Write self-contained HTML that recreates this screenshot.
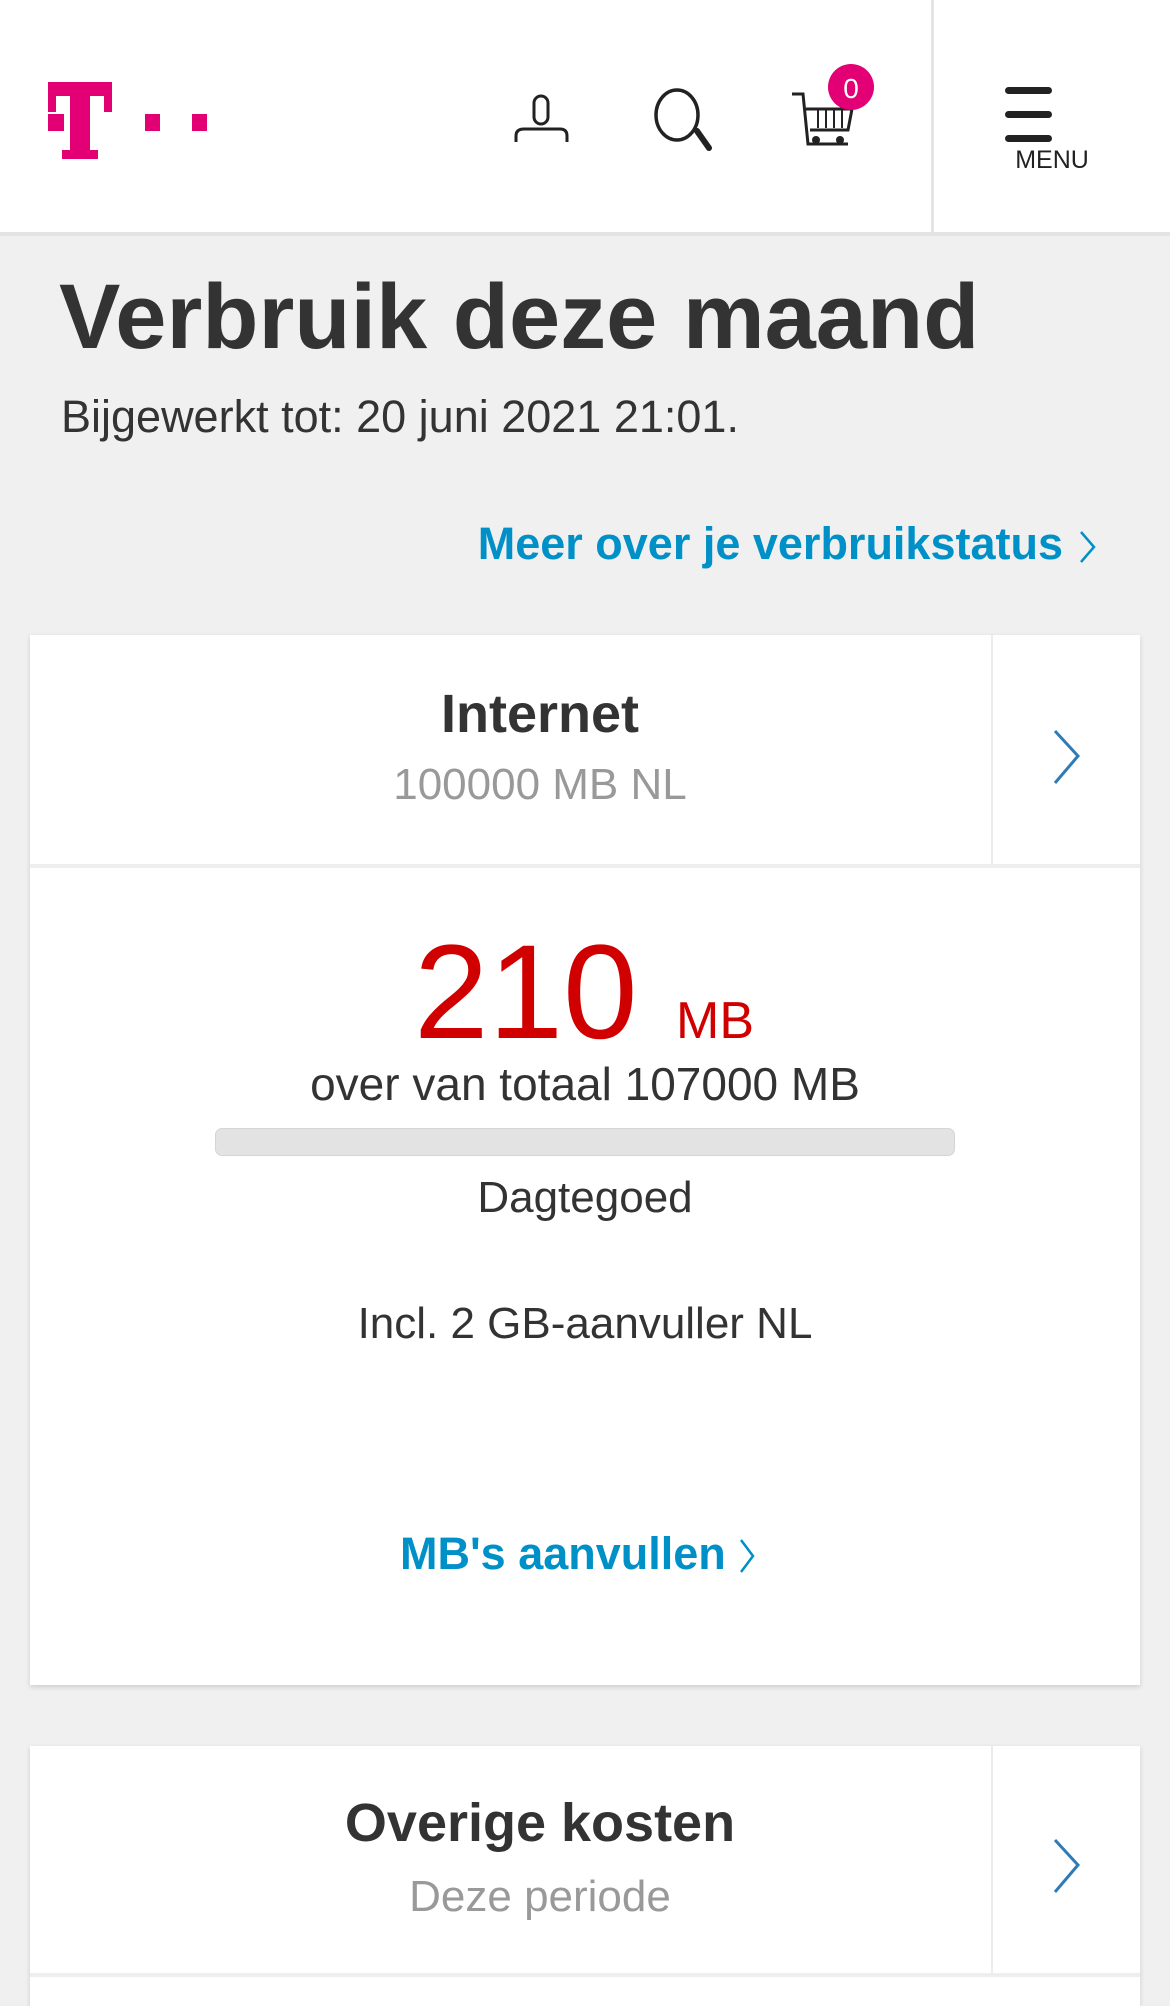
<!DOCTYPE html>
<html><head><meta charset="utf-8"><style>
*{margin:0;padding:0;box-sizing:border-box}
body{width:1170px;height:1992px;background:#f0f0f0;font-family:"Liberation Sans",Arial,sans-serif;color:#333;position:relative;overflow:hidden}
.a{position:absolute;white-space:nowrap;line-height:1}
.hdr{position:absolute;left:0;top:0;width:1170px;height:236px;background:#fff;border-bottom:4px solid #e4e4e4}
.card{position:absolute;left:30px;width:1110px;background:#fff;box-shadow:0 2px 5px rgba(0,0,0,.15)}
.c{text-align:center}
</style></head><body>
<div class="hdr">
  <svg class="a" style="left:0;top:0" width="1170" height="236">
    <rect x="48" y="82" width="64" height="14" fill="#e20074"/>
    <rect x="48" y="82" width="8" height="30" fill="#e20074"/>
    <rect x="104" y="82" width="8" height="30" fill="#e20074"/>
    <rect x="70" y="85" width="20" height="72" fill="#e20074"/>
    <rect x="62" y="150" width="36" height="9" fill="#e20074"/>
    <rect x="48" y="114" width="16" height="17" fill="#e20074"/>
    <rect x="145" y="114" width="15" height="17" fill="#e20074"/>
    <rect x="192" y="114" width="15" height="17" fill="#e20074"/>
    <rect x="534" y="96" width="14" height="28" rx="7" fill="none" stroke="#222" stroke-width="3"/>
    <path d="M516 142 V136 Q516 129 524 129 H560 Q567 129 567 136 V142" fill="none" stroke="#222" stroke-width="3"/>
    <ellipse cx="677" cy="115" rx="21" ry="25" fill="none" stroke="#222" stroke-width="3.5"/>
    <path d="M697 131 L709 148" stroke="#222" stroke-width="6" stroke-linecap="round"/>
    <path d="M792 94 H803 L808 144 H848 M806 109 H852 L848 130 H810" fill="none" stroke="#222" stroke-width="3"/>
    <path d="M818 110 V128 M826 110 V128 M834 110 V128 M842 110 V128" stroke="#222" stroke-width="2"/>
    <circle cx="816" cy="140" r="4" fill="#222"/><circle cx="840" cy="140" r="4" fill="#222"/>
    <circle cx="851" cy="87" r="23" fill="#e20074"/>
    <text x="851" y="98" font-family="Liberation Sans" font-size="28" fill="#fff" text-anchor="middle">0</text>
    <rect x="931" y="0" width="3" height="236" fill="#e4e4e4"/>
    <rect x="1005" y="87" width="47" height="7" rx="3.5" fill="#222"/>
    <rect x="1005" y="111" width="47" height="7" rx="3.5" fill="#222"/>
    <rect x="1005" y="135" width="47" height="7" rx="3.5" fill="#222"/>
    <text x="1052" y="168" font-family="Liberation Sans" font-size="25" fill="#222" text-anchor="middle">MENU</text>
  </svg>
</div>
<div class="a" style="left:59px;top:271px;font-size:92px;font-weight:bold">Verbruik deze maand</div>
<div class="a" style="left:61px;top:394px;font-size:45px">Bijgewerkt tot: 20 juni 2021 21:01.</div>
<div class="a" style="right:107px;top:521px;font-size:45px;font-weight:bold;color:#0090c8">Meer over je verbruikstatus</div>
<svg class="a" style="left:1078px;top:530px" width="20" height="34"><path d="M3 2 L16 17 L3 32" fill="none" stroke="#0090c8" stroke-width="2.5"/></svg>

<div class="card" style="top:635px;height:1050px">
  <div class="a" style="left:961px;top:0;width:2px;height:229px;background:#ebebeb"></div>
  <div class="a" style="left:0;top:229px;width:1110px;height:4px;background:#eee"></div>
  <svg class="a" style="left:1022px;top:94px" width="32" height="56"><path d="M3 2 L26 27 L3 54" fill="none" stroke="#2f7bb5" stroke-width="3"/></svg>
  <div class="a c" style="left:0;width:1020px;top:52px;font-size:54px;font-weight:bold">Internet</div>
  <div class="a c" style="left:0;width:1020px;top:128px;font-size:44px;color:#999">100000 MB NL</div>
  <div class="a" style="left:384px;top:291px;font-size:134px;color:#d00000">210</div>
  <div class="a" style="left:646px;top:360px;font-size:52px;color:#d00000">MB</div>
  <div class="a c" style="left:0;width:1110px;top:426px;font-size:46px">over van totaal 107000 MB</div>
  <div class="a" style="left:185px;top:493px;width:740px;height:28px;border-radius:7px;background:#e3e3e3;border:1px solid #d5d5d5"></div>
  <div class="a c" style="left:0;width:1110px;top:541px;font-size:44px">Dagtegoed</div>
  <div class="a c" style="left:0;width:1110px;top:667px;font-size:44px">Incl. 2 GB-aanvuller NL</div>
  <div class="a" style="left:370px;top:896px;font-size:45px;font-weight:bold;color:#0090c8">MB's aanvullen</div>
  <svg class="a" style="left:708px;top:903px" width="20" height="36"><path d="M3 2 L15 18 L3 34" fill="none" stroke="#0090c8" stroke-width="2.5"/></svg>
</div>

<div class="card" style="top:1746px;height:260px">
  <div class="a" style="left:961px;top:0;width:2px;height:227px;background:#ebebeb"></div>
  <div class="a" style="left:0;top:227px;width:1110px;height:4px;background:#eee"></div>
  <svg class="a" style="left:1022px;top:92px" width="32" height="56"><path d="M3 2 L26 27 L3 54" fill="none" stroke="#2f7bb5" stroke-width="3"/></svg>
  <div class="a c" style="left:0;width:1020px;top:50px;font-size:54px;font-weight:bold">Overige kosten</div>
  <div class="a c" style="left:0;width:1020px;top:129px;font-size:44px;color:#999">Deze periode</div>
</div>
</body></html>
